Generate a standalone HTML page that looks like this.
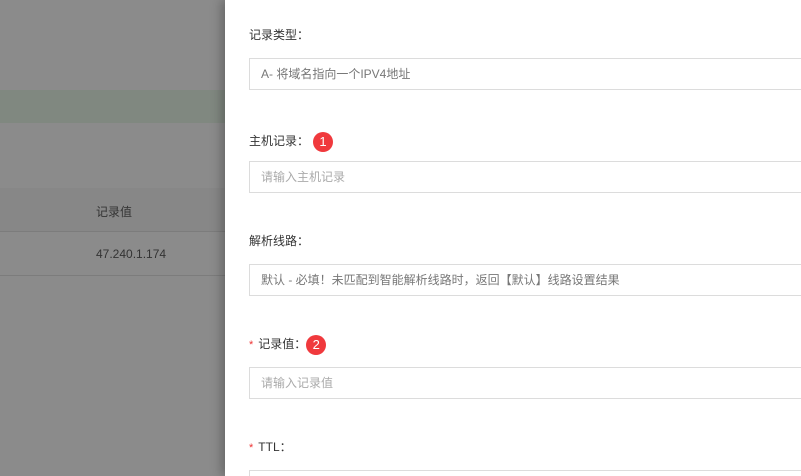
<html style="overflow:hidden;height:476px"><head><style>
body{margin:0;width:801px;height:476px;overflow:hidden;position:relative;background:#8b8b8b;font-family:"Liberation Sans","Noto Sans CJK SC",sans-serif;}
.a{position:absolute}
.panel{left:225px;top:0;width:576px;height:476px;background:#fff;box-shadow:-4px 0 10px rgba(0,0,0,.25)}
.lbl{position:absolute;left:249px;font-size:12px;color:#333;line-height:14px}
.inp{position:absolute;left:249px;width:560px;height:32px;border:1px solid #dcdcdc;box-sizing:border-box;font-size:12px;line-height:30px;padding-left:11px;color:#aaa}
.star{color:#e33;margin-right:5px;font-size:11px}
.b{display:inline-block;width:20px;height:20px;border-radius:50%;background:#f0393d;color:#fff;font-size:13px;text-align:center;line-height:20px;vertical-align:middle;margin-left:4px}
</style></head><body>
<div class="a" style="left:0;top:90px;width:225px;height:33px;background:#808880"></div>
<div class="a" style="left:0;top:188px;width:225px;height:43px;background:#878787"></div>
<div class="a" style="left:0;top:231px;width:225px;height:1px;background:#7c7c7c"></div>
<div class="a" style="left:0;top:275px;width:225px;height:1px;background:#7c7c7c"></div>
<div class="a" style="left:96px;top:203px;font-size:12px;color:#333">记录值</div>
<div class="a" style="left:96px;top:247px;font-size:12px;color:#333">47.240.1.174</div>
<div class="a panel"></div>
<div class="lbl" style="top:28px">记录类型：</div>
<div class="inp" style="top:58px;color:#777">A- 将域名指向一个IPV4地址</div>
<div class="lbl" style="top:132px">主机记录：<span class="b">1</span></div>
<div class="inp" style="top:161px">请输入主机记录</div>
<div class="lbl" style="top:234px">解析线路：</div>
<div class="inp" style="top:264px;color:#777">默认 - 必填！未匹配到智能解析线路时，返回【默认】线路设置结果</div>
<div class="lbl" style="top:335px"><span class="star">*</span>记录值：<span class="b" style="margin-left:0">2</span></div>
<div class="inp" style="top:367px">请输入记录值</div>
<div class="lbl" style="top:440px"><span class="star">*</span>TTL：</div>
<div class="inp" style="top:470px;height:6px;border-bottom:none"></div>
</body></html>
